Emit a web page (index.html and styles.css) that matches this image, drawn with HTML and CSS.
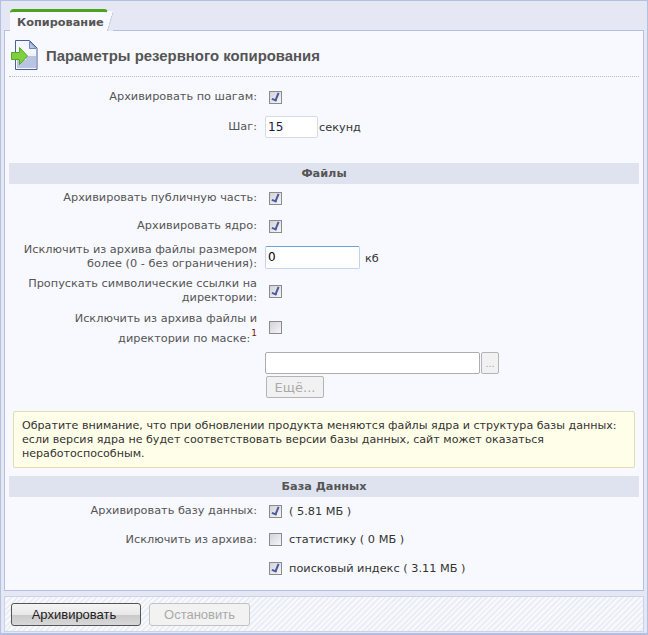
FILE: index.html
```html
<!DOCTYPE html>
<html>
    <head>
        <title>Копирование</title>
        <link rel="stylesheet" href="styles.css">
    </head>
    <body>
        <div class="window">
            <div class="tabs">
                <div class="tab">Копирование</div>
            </div>
            <div class="panel">
                <div class="title">
                    <svg class="title-icon" width="27" height="31" viewBox="0 0 27 31">
                        <path d="M4.500 .5H18.500L26 8V29.500H4.500Z" fill="#f4f7fd" stroke="#4a5f9c"/>
                        <path d="M6 13H25V28H6Z" fill="#b9c4e2"/>
                        <path d="M6 13H25V16H15V20H6Z" fill="#eef2fa"/>
                        <path d="M18.500 1.500V8.500H25Z" fill="#b5c5e6" stroke="#6f86bd"/>
                        <path d="M.5 12.500H8.500V7.500L16.500 16 8.500 24.500V19.500H.5Z" fill="#7ed03c" stroke="#5aa626"/>
                    </svg>
                    <span>Параметры резервного копирования</span>
                </div>

                <div class="row row-first">
                    <div class="label">Архивировать по шагам:</div>
                    <div class="value"><span class="check on"></span></div>
                </div>
                <div class="row row-step">
                    <div class="label">Шаг:</div>
                    <div class="value">
                        <input class="text step-input" value="15">
                        <span class="unit">секунд</span>
                    </div>
                </div>

                <div class="heading heading-files">Файлы</div>
                <div class="row row-28">
                    <div class="label">Архивировать публичную часть:</div>
                    <div class="value"><span class="check on"></span></div>
                </div>
                <div class="row row-28">
                    <div class="label">Архивировать ядро:</div>
                    <div class="value"><span class="check on"></span></div>
                </div>
                <div class="row row-34">
                    <div class="label">Исключить из архива файлы размером<br>более (0 - без ограничения):</div>
                    <div class="value">
                        <input class="text size-input" value="0">
                        <span class="unit unit-kb">кб</span>
                    </div>
                </div>
                <div class="row row-34">
                    <div class="label">Пропускать символические ссылки на<br>директории:</div>
                    <div class="value"><span class="check on"></span></div>
                </div>
                <div class="row row-mask">
                    <div class="label">Исключить из архива файлы и<br>директории по маске:<sup>1</sup></div>
                    <div class="value"><span class="check"></span></div>
                </div>
                <div class="row row-path">
                    <div class="label"></div>
                    <div class="value">
                        <input class="text path-input">
                        <button class="btn-browse" disabled>...</button>
                    </div>
                </div>
                <div class="row row-more">
                    <div class="label"></div>
                    <div class="value"><button class="btn-more" disabled>Ещё...</button></div>
                </div>

                <div class="note">Обратите внимание, что при обновлении продукта меняются файлы ядра и структура базы данных: если версия ядра не будет соответствовать версии базы данных, сайт может оказаться неработоспособным.</div>

                <div class="heading">База Данных</div>
                <div class="row row-28">
                    <div class="label">Архивировать базу данных:</div>
                    <div class="value"><span class="check on"></span><span class="opt">( 5.81 МБ )</span></div>
                </div>
                <div class="row row-29">
                    <div class="label">Исключить из архива:</div>
                    <div class="value"><span class="check"></span><span class="opt">статистику ( 0 МБ )</span></div>
                </div>
                <div class="row row-28">
                    <div class="label"></div>
                    <div class="value"><span class="check on"></span><span class="opt">поисковый индекс ( 3.11 МБ )</span></div>
                </div>
            </div>
            <div class="footer">
                <button class="btn btn-main">Архивировать</button>
                <button class="btn btn-off" disabled>Остановить</button>
            </div>
        </div>
    </body>
</html>
```

FILE: styles.css
```css
html, body {
    margin: 0;
    padding: 0;
    background-color: #e5e8f4;
}
body {
    font-family: "DejaVu Sans", sans-serif;
    font-size: 11.300px;
    color: #555;
}


.window {
    box-sizing: border-box;
    width: 648px;
    height: 635px;
    padding: 8px 3px 4px 3px;
    border: 1px solid #b4c0df;
    border-bottom-width: 2px;
    background-color: #e5e8f4;
}


.tabs {
    height: 21px;
    display: flex;
    align-items: flex-end;
}
.tab {
    box-sizing: border-box;
    height: 22px;
    margin-bottom: -1px;
    margin-left: 6px;
    padding: 4px 0 0 7px;
    width: 98px;
    position: relative;
    z-index: 1;
    background-color: #f7f9fe;
    border-top: 3px solid #4ba41f;
    border-radius: 4px 4px 0 0;
    font-weight: bold;
    color: #555;
    white-space: nowrap;
}
.tab::after {
    content: "";
    position: absolute;
    top: -1px;
    right: -5px;
    width: 6px;
    height: 20px;
    background: linear-gradient(to bottom right, #f7f9fe 49%, #bcc6dd 50%, #e5e8f4 62%);
}


.panel {
    box-sizing: border-box;
    height: 561px;
    padding: 0 4px;
    background-color: #f7f9fe;
    border: 1px solid #b4c0df;
}


.title {
    display: flex;
    align-items: center;
    gap: 8px;
    height: 41px;
    margin-bottom: 8px;
    padding-top: 4px;
    padding-left: 2px;
    border-bottom: 1px dotted #b9b9b9;
    font-family: "Liberation Sans", sans-serif;
    font-weight: bold;
    font-size: 14.900px;
    color: #555;
}
.title-icon {
    flex: none;
}


.row {
    display: grid;
    grid-template-columns: 248px 1fr;
    column-gap: 8px;
    align-items: center;
}
.label {
    text-align: right;
    line-height: 14px;
}
.value {
    display: flex;
    align-items: center;
    color: #333;
}
.row-first { height: 24px; }
.row-step { height: 24px; margin-top: 6px; }
.row-28 { height: 28px; }
.row-29 { height: 29px; }
.row-34 { height: 34px; }
.row-mask { height: 42px; }
.row-mask .label { line-height: 20px; }
.row-mask .value { margin-top: -4px; }
.row-path { height: 26px; }
.row-more { height: 22px; }


.check {
    box-sizing: border-box;
    display: inline-block;
    position: relative;
    width: 13px;
    height: 13px;
    margin-left: 4px;
    border: 1px solid #8b8b8b;
    background: linear-gradient(135deg, #d2d2d8, #f6f6f8);
}
.check.on::after {
    content: "";
    position: absolute;
    left: 3px;
    top: 0;
    width: 3px;
    height: 7px;
    border: solid #4a5a9e;
    border-width: 0 2px 2px 0;
    transform: rotate(22deg);
}
.opt {
    margin-left: 7px;
}


.text {
    box-sizing: border-box;
    padding: 0 2px;
    background-color: #fff;
    border: 1px solid #d7dbe3;
    border-radius: 2px;
    font-family: "DejaVu Sans", sans-serif;
    font-size: 12px;
    color: #1a1a40;
    outline: none;
}
.step-input {
    width: 53px;
    height: 22px;
}
.size-input {
    width: 95px;
    height: 23px;
    color: #000;
    border-color: #bfd6ee;
    border-top-color: #6aa3d8;
}
.path-input {
    width: 215px;
    height: 22px;
    border-color: #adadad;
}
.unit {
    margin-left: 1px;
}
.unit-kb {
    margin-left: 5px;
    margin-top: 3px;
}
.btn-browse {
    box-sizing: border-box;
    width: 18px;
    height: 22px;
    margin-left: 1px;
    padding: 0;
    background-color: #f1f1f1;
    border: 1px solid #b4b4b4;
    border-radius: 2px;
    font-size: 11px;
    color: #aaa;
}
.btn-more {
    box-sizing: border-box;
    width: 58px;
    height: 22px;
    margin-left: 1px;
    padding: 0;
    background-color: #f1f1f1;
    border: 1px solid #b4b4b4;
    border-radius: 2px;
    font-family: "DejaVu Sans", sans-serif;
    font-size: 13px;
    color: #aaa;
}


.heading {
    height: 21px;
    line-height: 22px;
    background-color: #dfe3ef;
    text-align: center;
    font-weight: bold;
    color: #555;
}
.heading-files {
    margin-top: 24px;
}


.note {
    box-sizing: border-box;
    height: 57px;
    margin: 13px 0 8px 4px;
    width: 622px;
    padding: 7px 8px;
    background-color: #fffee8;
    border: 1px solid #e2dcb9;
    border-radius: 2px;
    font-size: 11.100px;
    line-height: 14px;
    color: #333;
}


.footer {
    box-sizing: border-box;
    display: flex;
    align-items: center;
    gap: 8px;
    height: 36px;
    margin-top: 5px;
    padding-left: 6px;
    border: 1px solid #ccd3e8;
    background-color: #f7f8fc;
    background-image: repeating-linear-gradient(135deg, #eceef5 0 2px, #f8f9fd 2px 4px);
}
.btn {
    box-sizing: border-box;
    height: 23px;
    padding: 0;
    border-radius: 3px;
    font-family: "Liberation Sans", sans-serif;
    font-size: 13px;
}
.btn-main {
    width: 130px;
    padding-right: 4px;
    color: #222;
    border: 1px solid #555;
    background: linear-gradient(to bottom, #f5f5f5 0, #e8e8e8 50%, #c9c9c9 51%, #d8d8d8 100%);
}
.btn-off {
    width: 101px;
    color: #aaa;
    border: 1px solid #c2c2c2;
    background-color: #f2f2f2;
}
sup {
    display: inline-block;
    margin-left: 1px;
    font-size: 9px;
    color: #7a1a00;
    line-height: 9px;
    vertical-align: 6px;
}
```
